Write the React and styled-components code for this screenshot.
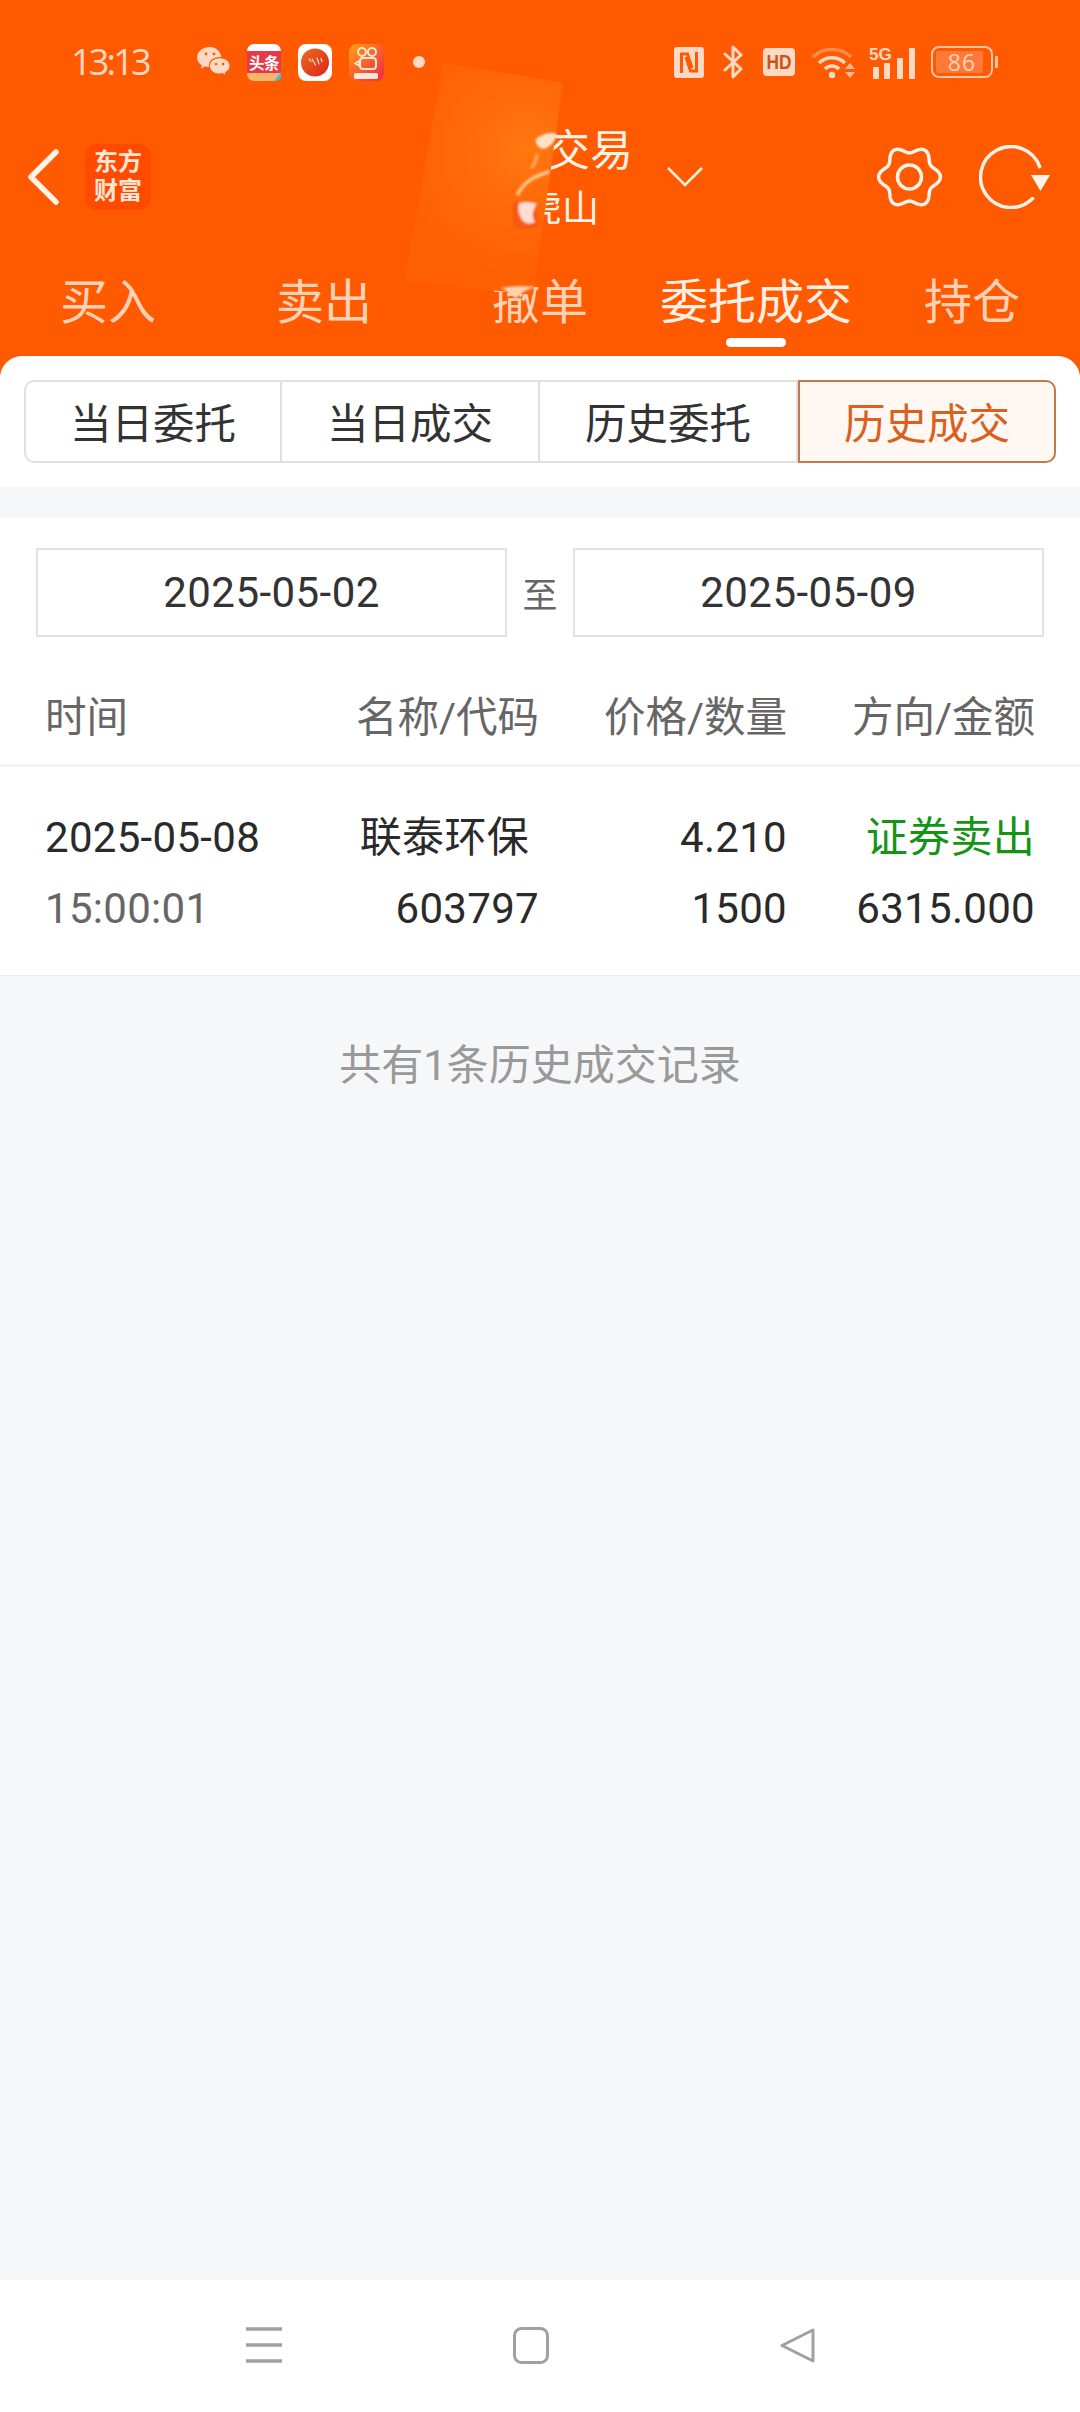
import React from "react";
import styled, { createGlobalStyle } from "styled-components";

const ORANGE = "#ff5a00";
const PEACH = "#ffd9c6";
const SANS = `Roboto, "Noto Sans CJK SC", sans-serif`;

const Global = createGlobalStyle`
  html, body { margin: 0; padding: 0; background: #f6f7f9; }
  * { box-sizing: border-box; }
`;

const Page = styled.div`
  width: 1080px;
  height: 2412px;
  display: flex;
  flex-direction: column;
  background: #f6f7f9;
  font-family: ${SANS};
  overflow: hidden;
`;

const Top = styled.header`
  position: relative;
  background: ${ORANGE};
`;

const StatusBar = styled.div`
  height: 124px;
  display: flex;
  align-items: center;
  padding: 0 82px 0 71px;
  color: ${PEACH};
`;

const Clock = styled.span`
  font-family: "Open Sans", sans-serif;
  font-size: 36px;
  line-height: 1;
  width: 126px;
  letter-spacing: -2.8px;
`;

const AppIcons = styled.div`
  display: flex;
  align-items: center;
  gap: 17px;
`;

const Dot = styled.span`
  width: 12px;
  height: 12px;
  border-radius: 50%;
  background: ${PEACH};
  margin-left: 29px;
`;

const SysIcons = styled.div`
  margin-left: auto;
  display: flex;
  align-items: center;
`;

const SysSlot = styled.span`
  display: flex;
  margin-left: ${(p) => p.$gap}px;
`;

const NavRow = styled.div`
  height: 106px;
  display: flex;
  align-items: center;
  padding: 0 30px 0 27px;
  color: #fff2e9;
`;

const Logo = styled.div`
  width: 66px;
  height: 66px;
  margin-left: 26px;
  border-radius: 12px;
  background: #ff4a00;
  color: #ffe6d6;
  font-family: ${SANS};
  font-weight: 700;
  font-size: 24px;
  line-height: 29px;
  text-align: center;
  padding-top: 4px;
`;

const TitleBlock = styled.div`
  width: 200px;
  flex: none;
  margin-left: 282px;
  display: flex;
  flex-direction: column;
  align-items: flex-end;
  font-family: "Noto Sans CJK SC", sans-serif;
`;

const Title = styled.div`
  font-size: 43px;
  line-height: 56px;
  margin-top: -4px;
`;

const SubTitle = styled.div`
  font-size: 37px;
  line-height: 50px;
  margin: 6px 34px 0 0;
`;

const NavActions = styled.div`
  margin-left: auto;
  display: flex;
  align-items: center;
  gap: 36px;
`;

const Chevron = styled.svg`
  margin-left: 34px;
`;

const Tabs = styled.nav`
  height: 126px;
  display: grid;
  grid-template-columns: repeat(5, 216px);
`;

const Tab = styled.div`
  position: relative;
  display: flex;
  justify-content: center;
  padding-top: 36px;
  font-family: "Noto Sans CJK SC", sans-serif;
  font-size: 48px;
  line-height: 64px;
  color: ${(p) => (p.$active ? "#fff0e6" : "#ffd2b8")};
`;

const TabMark = styled.span`
  position: absolute;
  left: 78px;
  top: 108px;
  width: 60px;
  height: 9px;
  border-radius: 5px;
  background: #fff;
`;

const Smear = styled.svg`
  position: absolute;
  left: 395px;
  top: 55px;
  pointer-events: none;
`;

const SegmentPanel = styled.div`
  background: #fff;
  border-radius: 22px 22px 0 0;
  padding: 24px 24px 24px;
`;

const Segments = styled.div`
  display: grid;
  grid-template-columns: repeat(4, 258px);
  height: 83px;
`;

const Segment = styled.div`
  display: flex;
  align-items: center;
  justify-content: center;
  padding-bottom: 2px;
  font-family: "Noto Sans CJK SC", sans-serif;
  font-size: 41.5px;
  color: ${(p) => (p.$active ? "#d9601f" : "#333")};
  background: ${(p) => (p.$active ? "#fff7f2" : "#fff")};
  border: 2px solid ${(p) => (p.$active ? "#c07a4a" : "#e0e0e0")};
  border-left-width: ${(p) => (p.$first || p.$active ? "2px" : "0")};
  border-radius: ${(p) =>
    p.$first ? "10px 0 0 10px" : p.$active ? "0 10px 10px 0" : "0"};
`;

const Band = styled.div`
  height: 31px;
`;

const Panel = styled.section`
  background: #fff;
`;

const DateBar = styled.div`
  display: flex;
  align-items: center;
  padding: 30px 36px 0 36px;
`;

const DateBox = styled.div`
  flex: 1;
  height: 89px;
  display: flex;
  align-items: center;
  justify-content: center;
  border: 2px solid #e2e2e2;
  font-size: 42px;
  letter-spacing: 0.45px;
  color: #333;
`;

const To = styled.span`
  width: 66px;
  text-align: center;
  font-family: "Noto Sans CJK SC", sans-serif;
  font-size: 35px;
  color: #666;
`;

const Grid = styled.div`
  display: grid;
  grid-template-columns: 1fr 240px 248px 248px;
  padding: 0 45px 0 45px;
`;

const HeadRow = styled(Grid)`
  box-sizing: content-box;
  height: 94px;
  align-items: center;
  padding-top: 30px;
  padding-bottom: 3px;
  border-bottom: 3px solid #f2f3f5;
  font-size: 41.5px;
  color: #666;
`;

const HeadCell = styled.span`
  text-align: ${(p) => (p.$left ? "left" : "right")};
`;

const DataRow = styled(Grid)`
  padding-top: 43px;
  padding-bottom: 38px;
  row-gap: 15px;
  border-bottom: 1px solid #ececec;
`;

const Cell = styled.span`
  font-size: 42px;
  line-height: 56px;
  letter-spacing: 0.3px;
  text-align: ${(p) => (p.$left ? "left" : "right")};
  color: ${(p) => p.$color || "#2a2a2a"};
  margin-right: ${(p) => p.$inset || 0}px;
`;

const Note = styled.div`
  text-align: center;
  font-size: 42px;
  line-height: 56px;
  color: #999;
  margin-top: 62px;
`;

const Spacer = styled.div`
  flex: 1;
`;

const BottomNav = styled.footer`
  height: 132px;
  background: #fff;
  display: flex;
  align-items: flex-start;
  gap: 231px;
  padding: 47px 0 0 246px;
`;

const gearPath = (() => {
  const pts = [];
  for (let i = 0; i < 240; i++) {
    const t = (i / 240) * Math.PI * 2;
    const r = 27.5 + 3.4 * Math.cos(6 * t);
    pts.push(`${(32.5 + r * Math.cos(t)).toFixed(2)} ${(32 + r * Math.sin(t)).toFixed(2)}`);
  }
  return "M" + pts.join("L") + "Z";
})();

const WeChat = () => (
  <svg width="33" height="30" viewBox="0 0 33 30">
    <path d="M13 0C6 0 0 4.4 0 10.4c0 3.3 1.9 6 4.8 7.8L4 21.5l4-2.2c1.4.4 2.6.6 4 .6C11 13 18 9.600 24.500 9.800 23.300 4.200 18.500 0 13 0Z" fill={PEACH} />
    <path d="M22.500 10.800C17 10.800 12.500 14.400 12.500 19c0 4.500 4.500 8.100 10 8.100 1.200 0 2.300-.2 3.300-.5l3.200 2-.7-3.100c2.800-1.500 4.700-3.900 4.700-6.500 0-4.600-4.500-8.200-10-8.200Z" fill={PEACH} stroke={ORANGE} strokeWidth="1" />
    <circle cx="9" cy="7" r="1.400" fill={ORANGE} />
    <circle cx="17" cy="7" r="1.400" fill={ORANGE} />
    <circle cx="19" cy="17" r="1.300" fill={ORANGE} />
    <circle cx="26" cy="17" r="1.300" fill={ORANGE} />
  </svg>
);

const Toutiao = () => (
  <svg width="34" height="37" viewBox="0 0 34 37">
    <rect width="34" height="37" rx="7" fill="#e8394a" />
    <path d="M0 7a7 7 0 0 1 7-7h20a7 7 0 0 1 7 7H0Z" fill="#fff" />
    <path d="M0 29h34v1a7 7 0 0 1-7 7H7a7 7 0 0 1-7-7Z" fill="#f5b56a" />
    <text x="17" y="25" textAnchor="middle" fontSize="15.500" fontWeight="700" fill="#fff" fontFamily="Noto Sans CJK SC" letterSpacing="-0.500">头条</text>
    <path d="M27 37l7-9v4a5 5 0 0 1-5 5Z" fill="#3cc3d8" />
  </svg>
);

const Podcast = () => (
  <svg width="34" height="37" viewBox="0 0 34 37">
    <defs>
      <linearGradient id="pod" x1="0" y1="0" x2="1" y2="1">
        <stop offset="0" stopColor="#f06a1c" />
        <stop offset="1" stopColor="#d8261c" />
      </linearGradient>
    </defs>
    <rect width="34" height="37" rx="8" fill="#fff" />
    <circle cx="17" cy="18.500" r="14" fill="url(#pod)" />
    <g stroke="#ffe0c8" strokeWidth="1.200" strokeLinecap="round">
      <path d="M11 15l2 2.500M14 15l3.500 6M19 14l2 6M23 14.500l1 3" />
    </g>
  </svg>
);

const Kuaishou = () => (
  <svg width="35" height="37" viewBox="0 0 35 37">
    <defs>
      <linearGradient id="ks" x1="0" y1="0" x2="1" y2="1">
        <stop offset="0" stopColor="#ffa20f" />
        <stop offset="1" stopColor="#f0244a" />
      </linearGradient>
    </defs>
    <rect width="35" height="37" rx="8" fill="url(#ks)" />
    <circle cx="13" cy="8" r="4" fill="none" stroke="#ffe6d6" strokeWidth="2" />
    <circle cx="23" cy="8" r="4" fill="none" stroke="#ffe6d6" strokeWidth="2" />
    <rect x="11" y="14" width="16" height="11" rx="3" fill="none" stroke="#ffe6d6" strokeWidth="2" />
    <path d="M10 17l-4 2.500 4 2.500Z" fill="none" stroke="#ffe6d6" strokeWidth="1.500" />
    <rect x="5" y="29" width="24" height="6" rx="1.500" fill="#ffe6d6" />
  </svg>
);

const NfcIcon = () => (
  <svg width="30" height="31" viewBox="0 0 30 31">
    <rect width="30" height="31" rx="3" fill={PEACH} />
    <path d="M7.500 26V7l6 0 4.500 14M22.500 5v19l-6 0-4.500-14" fill="none" stroke={ORANGE} strokeWidth="3" />
  </svg>
);

const BluetoothIcon = () => (
  <svg width="21" height="34" viewBox="0 0 21 34">
    <path d="M2 9l16 15-8 8V2l8 8L2 25" fill="none" stroke={PEACH} strokeWidth="3" strokeLinejoin="round" strokeLinecap="round" />
  </svg>
);

const HdIcon = () => (
  <svg width="32" height="28" viewBox="0 0 32 28">
    <rect width="32" height="28" rx="4" fill={PEACH} />
    <text x="16" y="21" textAnchor="middle" fontFamily="Liberation Sans" fontWeight="700" fontSize="20" textLength="25" lengthAdjust="spacingAndGlyphs" fill="#c85514">HD</text>
  </svg>
);

const WifiIcon = () => (
  <svg width="43" height="33" viewBox="0 0 43 33">
    <path d="M1 11C11 1 29 1 39 11" fill="none" stroke="#ff8a4c" strokeWidth="3.500" />
    <path d="M7 17c7-7 19-7 26 0" fill="none" stroke={PEACH} strokeWidth="3.500" />
    <path d="M13 23c4-4 10-4 14 0" fill="none" stroke={PEACH} strokeWidth="3.500" />
    <circle cx="20" cy="29" r="3.200" fill={PEACH} />
    <path d="M33 23l5-6 5 6ZM33 26l5 6 5-6Z" fill="#ffb896" />
  </svg>
);

const SignalIcon = () => (
  <svg width="46" height="33" viewBox="0 0 46 33">
    <text x="0" y="14" fontFamily="Liberation Sans" fontWeight="700" fontSize="17" textLength="23" lengthAdjust="spacingAndGlyphs" fill={PEACH}>5G</text>
    <rect x="4" y="21" width="6" height="12" rx="1" fill={PEACH} />
    <rect x="15" y="17" width="6" height="16" rx="1" fill={PEACH} />
    <rect x="28" y="12" width="6" height="21" rx="1" fill={PEACH} />
    <rect x="40" y="2" width="6" height="31" rx="1" fill={PEACH} />
  </svg>
);

const BatteryIcon = () => (
  <svg width="67" height="32" viewBox="0 0 67 32">
    <rect x="1" y="1" width="60" height="30" rx="7" fill="none" stroke="#ffc4a4" strokeWidth="2" />
    <rect x="5" y="5" width="47" height="22" rx="2" fill="#ff7a38" />
    <text x="31" y="25" textAnchor="middle" fontFamily="Open Sans" fontSize="23" fill="#ffd2ba" letterSpacing="1">86</text>
    <rect x="64" y="10" width="3" height="12" rx="1" fill="#ffc4a4" />
  </svg>
);

const SmearArt = () => (
  <Smear width="240" height="260" viewBox="0 0 240 260">
    <defs>
      <radialGradient id="glow" gradientUnits="userSpaceOnUse" cx="130" cy="95" r="125">
        <stop offset="0" stopColor="#ff7810" />
        <stop offset="0.45" stopColor="#ff6a0a" />
        <stop offset="1" stopColor="#ff6004" />
      </radialGradient>
      <filter id="soft"><feGaussianBlur stdDeviation="1" /></filter>
    </defs>
    <path d="M48 8L168 28L138 240L10 225Z" fill="url(#glow)" />
    <g filter="url(#soft)" fill="none" strokeLinecap="round">
      <path d="M141 84c8-6 14-7 21-5c-2 8-8 14-14 15c-5-1-8-6-7-10Z" fill="#ffe2c8" />
      <path d="M142 100c-1 6-3 10-5 12" stroke="#ffb060" strokeWidth="3" />
      <path d="M153 117c-12 4-24 9-30 22" stroke="#ffc890" strokeWidth="3.500" />
      <path d="M119 146c-2 9-2 18 0 26c7 3 16 3 24 0l-2-26Z" fill="#f55a10" />
      <path d="M124 148c6-2 14-1 18 1c-4 6-6 12-2 18c-6 3-12 2-15-6c-2-4-2-9-1-13Z" fill="#ffdccf" />
      <path d="M106 233c10-2 24-2 35-1c-8 2-16 6-20 12c-4-4-9-8-15-11Z" fill="#ffd2b0" />
    </g>
  </Smear>
);

const TABS = ["买入", "卖出", "撤单", "委托成交", "持仓"];
const SEGMENTS = ["当日委托", "当日成交", "历史委托", "历史成交"];

export default function App() {
  return (
    <Page>
      <Global />
      <Top>
        <StatusBar>
          <Clock>13:13</Clock>
          <AppIcons>
            <WeChat />
            <Toutiao />
            <Podcast />
            <Kuaishou />
          </AppIcons>
          <Dot />
          <SysIcons>
            <SysSlot $gap={0}><NfcIcon /></SysSlot>
            <SysSlot $gap={19}><BluetoothIcon /></SysSlot>
            <SysSlot $gap={19}><HdIcon /></SysSlot>
            <SysSlot $gap={17}><WifiIcon /></SysSlot>
            <SysSlot $gap={14}><SignalIcon /></SysSlot>
            <SysSlot $gap={16}><BatteryIcon /></SysSlot>
          </SysIcons>
        </StatusBar>
        <NavRow>
          <svg width="32" height="56" viewBox="0 0 32 56">
            <path d="M29 3L4 28l25 25" fill="none" stroke="#fff2e9" strokeWidth="5.500" strokeLinecap="round" strokeLinejoin="round" />
          </svg>
          <Logo>东方<br />财富</Logo>
          <TitleBlock>
            <Title>交易</Title>
            <SubTitle>虎山</SubTitle>
          </TitleBlock>
          <Chevron width="36" height="20" viewBox="0 0 36 20">
            <path d="M1 1l17 17L35 1" fill="none" stroke="#fff2e9" strokeWidth="2.500" />
          </Chevron>
          <NavActions>
            <svg width="66" height="66" viewBox="0 0 66 64">
              <path d={gearPath} fill="none" stroke="#fff2e9" strokeWidth="3.500" />
              <circle cx="32.500" cy="32" r="12" fill="none" stroke="#fff2e9" strokeWidth="3.500" />
            </svg>
            <svg width="71" height="64" viewBox="0 0 71 64">
              <path d="M53.600 53.600A30.500 30.500 0 1 1 60.700 21.600" fill="none" stroke="#fff2e9" strokeWidth="3.500" strokeLinecap="round" />
              <path d="M52 30h19l-9.500 16Z" fill="#fff2e9" />
            </svg>
          </NavActions>
        </NavRow>
        <Tabs>
          {TABS.map((t, i) => (
            <Tab key={t} $active={i === 3}>
              {t}
              {i === 3 && <TabMark />}
            </Tab>
          ))}
        </Tabs>
        <SmearArt />
        <SegmentPanel>
          <Segments>
            {SEGMENTS.map((s, i) => (
              <Segment key={s} $first={i === 0} $active={i === 3}>{s}</Segment>
            ))}
          </Segments>
        </SegmentPanel>
      </Top>
      <Band />
      <Panel>
        <DateBar>
          <DateBox>2025-05-02</DateBox>
          <To>至</To>
          <DateBox>2025-05-09</DateBox>
        </DateBar>
        <HeadRow>
          <HeadCell $left>时间</HeadCell>
          <HeadCell>名称/代码</HeadCell>
          <HeadCell>价格/数量</HeadCell>
          <HeadCell>方向/金额</HeadCell>
        </HeadRow>
        <DataRow>
          <Cell $left>2025-05-08</Cell>
          <Cell $inset={10}>联泰环保</Cell>
          <Cell>4.210</Cell>
          <Cell $color="#149414">证券卖出</Cell>
          <Cell $left $color="#666">15:00:01</Cell>
          <Cell>603797</Cell>
          <Cell>1500</Cell>
          <Cell>6315.000</Cell>
        </DataRow>
      </Panel>
      <Note>共有1条历史成交记录</Note>
      <Spacer />
      <BottomNav>
        <svg width="36" height="36" viewBox="0 0 36 36">
          <path d="M0 2h36M0 18h36M0 34h36" stroke="#a0a0a0" strokeWidth="3.500" />
        </svg>
        <svg width="36" height="37" viewBox="0 0 36 37">
          <rect x="1.500" y="1.500" width="33" height="34" rx="7" fill="none" stroke="#a0a0a0" strokeWidth="3" />
        </svg>
        <svg width="36" height="37" viewBox="0 0 36 37">
          <path d="M33 3v31L2 18.500Z" fill="none" stroke="#a0a0a0" strokeWidth="3" strokeLinejoin="round" />
        </svg>
      </BottomNav>
    </Page>
  );
}
